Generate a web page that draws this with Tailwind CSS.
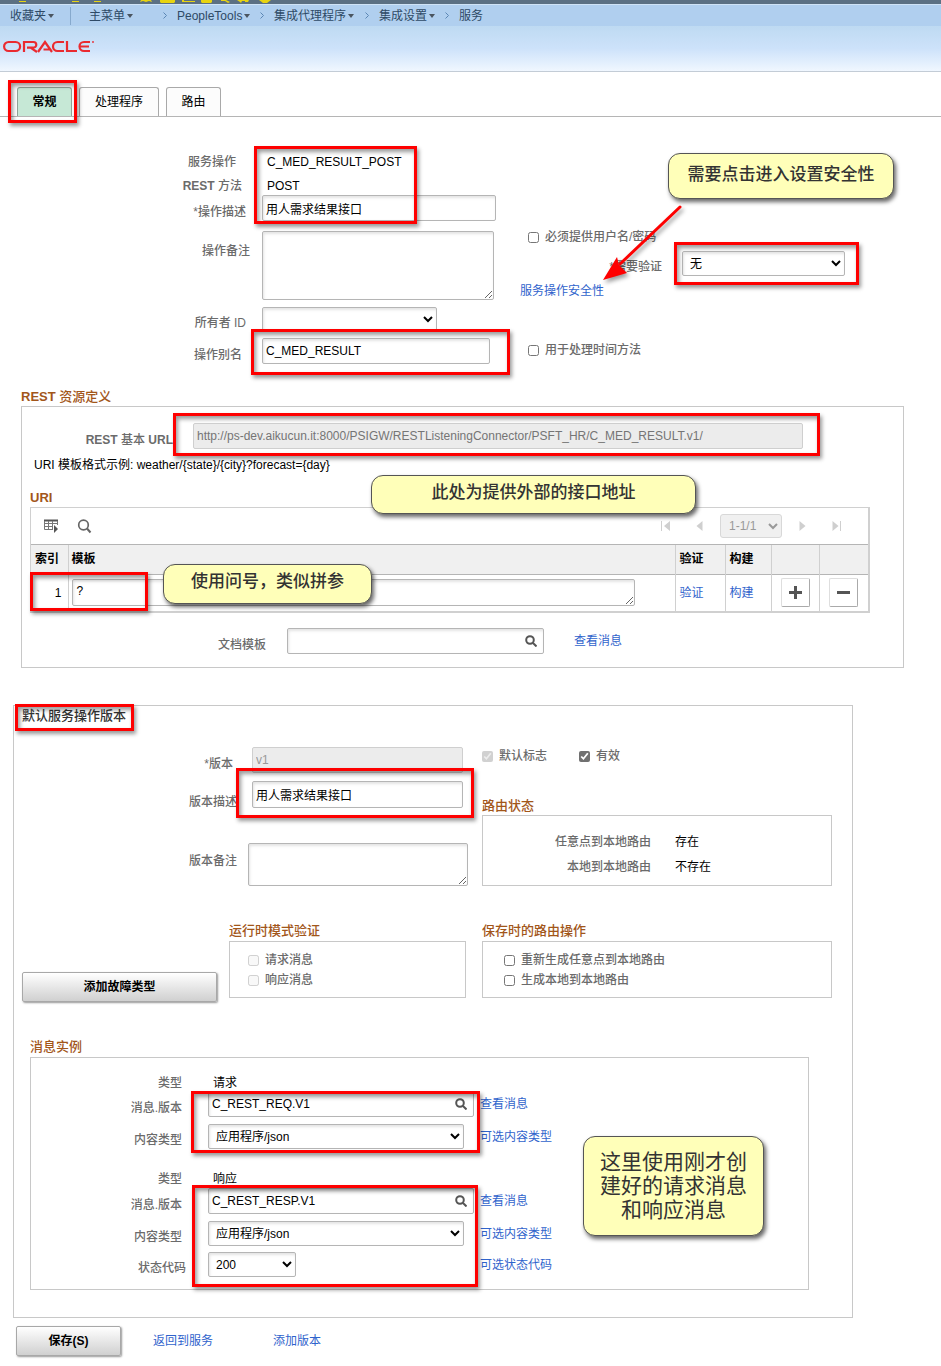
<!DOCTYPE html>
<html lang="zh-CN">
<head>
<meta charset="utf-8">
<meta name="viewport" content="width=device-width, initial-scale=1">
<title>服务操作</title>
<script src="https://cdn.jsdelivr.net/npm/@tailwindcss/browser@4"></script>
</head>
<body class="bg-white">
<div class="relative font-['Liberation_Sans','Noto_Sans_CJK_SC',sans-serif] text-[12px] leading-[18px] text-black">

<!-- top strip -->
<div class="h-1 bg-[#5b7083] overflow-hidden">
  <svg class="block" width="300" height="4" viewBox="0 0 300 4" fill="#e8d410">
    <path d="M19 1h7v1h-7zM72 1h7v1h-7zM94 1h7v1h-7z"/>
    <path d="M141 0h10l1 2-3-1-3 1-3-1-3 1zM160 0h15v2l-1 1h-13l-1-1zM182 0h2v1h11v1h-13zM201 0h11v2l-1 1h-9l-1-1zM221 0h5l4 2-2 1-3-2h-4zM237 0h12l-1 2h-3v-1h-3l-1 2-1-1zM259 0h12l-4 3h-4z"/>
  </svg>
</div>
<nav class="flex h-[22px] items-center bg-[#b0cfef] border-t border-[#cfe3f6] text-[#2e4a66]" aria-label="导航路径">
  <div class="flex w-[71px] items-center border-r border-[#86a9cd] pl-2.5">
    <a href="#">收藏夹</a><svg class="ml-0.5" width="6" height="4" viewBox="0 0 6 4" fill="#4a5560"><path d="M0 0h6L3 4z"/></svg>
  </div>
  <div class="flex w-[106px] items-center pl-[18px] pr-2.5">
    <a href="#">主菜单</a><svg class="ml-0.5" width="6" height="4" viewBox="0 0 6 4" fill="#4a5560"><path d="M0 0h6L3 4z"/></svg>
    <svg class="ml-auto" width="4" height="7" viewBox="0 0 4 7" fill="none" stroke="#5b86b4"><path d="M.5.5 3.5 3.5.5 6.5"/></svg>
  </div>
  <div class="flex w-[97px] items-center pr-2.5">
    <a href="#">PeopleTools</a><svg class="ml-0.5" width="6" height="4" viewBox="0 0 6 4" fill="#4a5560"><path d="M0 0h6L3 4z"/></svg>
    <svg class="ml-auto" width="4" height="7" viewBox="0 0 4 7" fill="none" stroke="#5b86b4"><path d="M.5.5 3.5 3.5.5 6.5"/></svg>
  </div>
  <div class="flex w-[105px] items-center pr-2.5">
    <a href="#">集成代理程序</a><svg class="ml-0.5" width="6" height="4" viewBox="0 0 6 4" fill="#4a5560"><path d="M0 0h6L3 4z"/></svg>
    <svg class="ml-auto" width="4" height="7" viewBox="0 0 4 7" fill="none" stroke="#5b86b4"><path d="M.5.5 3.5 3.5.5 6.5"/></svg>
  </div>
  <div class="flex w-20 items-center pr-2.5">
    <a href="#">集成设置</a><svg class="ml-0.5" width="6" height="4" viewBox="0 0 6 4" fill="#4a5560"><path d="M0 0h6L3 4z"/></svg>
    <svg class="ml-auto" width="4" height="7" viewBox="0 0 4 7" fill="none" stroke="#5b86b4"><path d="M.5.5 3.5 3.5.5 6.5"/></svg>
  </div>
  <a href="#">服务</a>
</nav>
<header class="h-[46px] border-b border-[#c3ccd6] bg-linear-to-b from-[#bedaf2] via-[#cde2fa] to-[#f0f7ff] pl-[3px] pt-3.5">
  <svg role="img" aria-label="Oracle" width="92" height="13" viewBox="0 0 92 13" fill="none" stroke="#ea2a30" stroke-width="2.200">
    <rect x="1.100" y="2" width="16" height="9" rx="4.500"/>
    <path d="M21 12V2h9.500a2.800 2.800 0 0 1 0 5.600H24M27.500 7.600 34 12"/>
    <path d="M35 12 42 2 49 12M40.500 9.500h6"/>
    <path d="M61 2h-6.500a4.500 4.500 0 0 0 0 9H61"/>
    <path d="M64 1v10h10"/>
    <path d="M87 2h-6a4.500 4.500 0 0 0 0 9h6M77.500 6.500h8.500"/>
    <circle cx="90" cy="2" r=".6" stroke-width="1"/>
  </svg>
</header>

<div class="flex h-[45px] items-end gap-[7px] border-b border-[#b5b5b5] pl-[17px]" role="tablist">
  <button type="button" role="tab" aria-selected="true" class="h-[29px] w-[55px] rounded-t-[3px] border border-b-0 border-[#8fa397] bg-[#c6e8d6] font-bold">常规</button>
  <button type="button" role="tab" aria-selected="false" class="h-[29px] w-20 rounded-t-[3px] border border-b-0 border-[#a9a9a9] bg-[#fcfcfc]">处理程序</button>
  <button type="button" role="tab" aria-selected="false" class="h-[29px] w-[55px] rounded-t-[3px] border border-b-0 border-[#a9a9a9] bg-[#fcfcfc]">路由</button>
</div>

<form>
<!-- general fields -->
<div class="flex pt-[33px] text-[#6b6b6b] font-medium">
  <div class="w-[520px]">
    <div class="flex h-6 items-center"><span class="w-[250px] pr-3.5 text-right">服务操作</span><span class="pl-[17px] font-normal text-black">C_MED_RESULT_POST</span></div>
    <div class="flex h-[21px] items-end"><span class="w-[250px] pr-2 text-right"><b>REST</b> 方法</span><span class="pl-[17px] font-normal text-black">POST</span></div>
    <div class="flex items-end">
      <label for="descr" class="w-[250px] pr-1 text-right">*操作描述</label>
      <input id="descr" type="text" value="用人需求结果接口" class="ml-3 h-[26px] w-[234px] rounded-[2px] border border-[#b5b5b5] px-[3px] font-normal text-black shadow-[inset_1px_2px_3px_#e4e4e4]">
    </div>
    <div class="mt-2.5 flex items-start">
      <label for="note" class="w-[250px] pt-[11px] text-right">操作备注</label>
      <textarea id="note" class="ml-3 block h-[69px] w-[232px] rounded-[2px] border border-[#b5b5b5] px-[3px] font-normal text-black shadow-[inset_1px_2px_3px_#e4e4e4]"></textarea>
    </div>
    <div class="mt-[7px] flex items-end">
      <label for="owner" class="w-[250px] pr-1 text-right">所有者 ID</label>
      <select id="owner" class="ml-3 h-[25px] w-[175px] rounded-[2px] border border-[#b5b5b5] px-[3px] font-normal text-black shadow-[inset_1px_2px_3px_#e4e4e4]"><option></option></select>
    </div>
    <div class="mt-1.5 flex items-end">
      <label for="alias" class="w-[250px] pr-2 text-right">操作别名</label>
      <input id="alias" type="text" value="C_MED_RESULT" class="ml-3 h-[26px] w-[228px] rounded-[2px] border border-[#b5b5b5] px-[3px] font-normal text-black shadow-[inset_1px_2px_3px_#e4e4e4]">
    </div>
  </div>
  <div class="pt-[78px]">
    <label class="flex items-center gap-1.5 pl-2"><input type="checkbox" class="size-[11px]">必须提供用户名/密码</label>
    <div class="mt-1.5 flex h-6 items-end"><label for="auth" class="w-[142px] text-right">*需要验证</label>
      <select id="auth" class="ml-5 h-[25px] w-[163px] rounded-[2px] border border-[#b5b5b5] px-[3px] font-normal text-black shadow-[inset_1px_2px_3px_#e4e4e4]"><option>无</option></select></div>
    <div class="mt-1.5"><a href="#" class="font-normal text-[#2f63cc]">服务操作安全性</a></div>
    <label class="mt-[41px] flex items-center gap-1.5 pl-2"><input type="checkbox" class="size-[11px]">用于处理时间方法</label>
  </div>
</div>

<!-- REST resource -->
<section class="ml-[21px] mr-[37px] mt-6">
  <h2 class="text-[13px] font-medium text-[#a2561a]"><b>REST</b> 资源定义</h2>
  <div class="h-[262px] border border-[#c8c8c8] pt-4">
    <div class="flex items-end">
      <label for="base" class="w-[151px] text-right font-medium text-[#6b6b6b]"><b>REST</b> 基本 <b>URL</b></label>
      <input id="base" type="text" disabled value="http://ps-dev.aikucun.it:8000/PSIGW/RESTListeningConnector/PSFT_HR/C_MED_RESULT.v1/" class="ml-5 mr-[100px] h-[26px] min-w-0 flex-1 rounded-[2px] border border-[#cfcfcf] bg-[#ececec] px-[3px] text-[#757575]">
    </div>
    <p class="mt-[7px] pl-3">URI 模板格式示例: weather/{state}/{city}?forecast={day}</p>
    <h3 class="mt-[15px] pl-2 text-[13px] font-bold text-[#a2561a]">URI</h3>
    <div class="ml-2 mr-[33px] border border-r-2 border-b-2 border-[#d0d0d0]">
      <div class="flex h-[37px] items-center border-b border-[#b5b5b5] pl-3 pr-[26px]">
        <button type="button" aria-label="网格操作">
          <svg class="block" width="16" height="14" viewBox="0 0 16 14" fill="none" stroke="#777"><path d="M1 1.500h14" stroke="#555" stroke-width="2"/><path d="M1.500 2v8.500H10M1 4.500h13M1 7.500h9M5.500 2v8.500M9.500 2v8.500M14.500 2v4"/><path d="M11 6v8l4-4z" fill="#555" stroke="none"/></svg>
        </button>
        <button type="button" aria-label="查找" class="ml-[18px]">
          <svg class="block" width="15" height="15" viewBox="0 0 15 15" fill="none" stroke="#666" stroke-width="1.700"><circle cx="6.500" cy="6" r="4.800"/><path d="m10 9.500 3.500 4" stroke-width="2"/></svg>
        </button>
        <div class="ml-auto flex items-center text-[#999]">
          <button type="button" disabled aria-label="首行"><svg class="block" width="10" height="12" viewBox="0 0 10 12" fill="#cfcfcf"><path d="M0 1h1v10H0zM9 1v10L3 6z"/></svg></button>
          <button type="button" disabled aria-label="上一行" class="ml-[25px]"><svg class="block" width="7" height="12" viewBox="0 0 7 12" fill="#cfcfcf"><path d="M6.500 1v10L.5 6z"/></svg></button>
          <select disabled aria-label="行" class="ml-[17px] h-6 w-[62px] rounded-[3px] border border-[#d8d8d8] bg-[#f0f0f0] pl-1 text-[#999] opacity-100"><option>1-1/1</option></select>
          <button type="button" disabled aria-label="下一行" class="ml-[17px]"><svg class="block" width="7" height="12" viewBox="0 0 7 12" fill="#cfcfcf"><path d="M.5 1v10l6-5z"/></svg></button>
          <button type="button" disabled aria-label="末行" class="ml-[26px]"><svg class="block" width="10" height="12" viewBox="0 0 10 12" fill="#cfcfcf"><path d="M8 1h1v10H8zM.5 1v10l6-5z"/></svg></button>
        </div>
      </div>
      <table class="w-full table-fixed border-collapse text-left">
        <thead><tr class="h-[29px] border-b border-[#b5b5b5] bg-[#f0f0f0]">
          <th class="w-[37px] border-r border-[#d0d0d0] pl-1">索引</th>
          <th class="border-r border-[#d0d0d0] pl-[3px]">模板</th>
          <th class="w-[50px] border-r border-[#d0d0d0] pl-1">验证</th>
          <th class="w-[46px] border-r border-[#d0d0d0] pl-1">构建</th>
          <th class="w-12 border-r border-[#d0d0d0]"></th>
          <th class="w-[49px]"></th>
        </tr></thead>
        <tbody><tr class="h-[37px]">
          <td class="border-r border-[#d0d0d0] pr-1.5 text-right">1</td>
          <td class="border-r border-[#d0d0d0] pl-[3px] pr-10"><textarea aria-label="模板" class="block h-[27px] w-full rounded-[2px] border border-[#b5b5b5] px-1 py-0.5 shadow-[inset_1px_2px_3px_#e4e4e4]">?</textarea></td>
          <td class="border-r border-[#d0d0d0] pl-1"><a href="#" class="text-[#2f63cc]">验证</a></td>
          <td class="border-r border-[#d0d0d0] pl-1"><a href="#" class="text-[#2f63cc]">构建</a></td>
          <td class="border-r border-[#d0d0d0]"><button type="button" aria-label="添加行" class="mx-auto flex size-[29px] items-center justify-center rounded-[2px] border border-[#dedede] border-b-[#aaa] border-r-[#aaa]"><svg width="13" height="13" viewBox="0 0 13 13" stroke="#555" stroke-width="3"><path d="M0 6.500h13M6.500 0v13"/></svg></button></td>
          <td><button type="button" aria-label="删除行" class="mx-auto flex size-[29px] items-center justify-center rounded-[2px] border border-[#dedede] border-b-[#aaa] border-r-[#aaa]"><svg width="13" height="13" viewBox="0 0 13 13" stroke="#555" stroke-width="3"><path d="M0 6.500h13"/></svg></button></td>
        </tr></tbody>
      </table>
    </div>
    <div class="mt-[15px] flex items-center">
      <label for="doc" class="w-[244px] pt-2 text-right font-medium text-[#6b6b6b]">文档模板</label>
      <div class="ml-[21px] flex h-[26px] w-[257px] items-center rounded-[2px] border border-[#b5b5b5] pr-1.5 shadow-[inset_1px_2px_3px_#e4e4e4]">
        <input id="doc" type="text" class="min-w-0 flex-1 px-1 outline-none">
        <button type="button" aria-label="查找文档模板"><svg class="block" width="12" height="12" viewBox="0 0 12 12" fill="none" stroke="#555" stroke-width="2"><circle cx="5" cy="5" r="3.800"/><path d="m8 8 3.500 3.500"/></svg></button>
      </div>
      <a href="#" class="ml-[30px] text-[#2f63cc]">查看消息</a>
    </div>
  </div>
</section>

<!-- default version -->
<section class="ml-[13px] mr-[88px] mt-[37px] h-[613px] border border-[#c8c8c8] font-medium text-[#6b6b6b]">
  <h2 class="pl-2 text-[13px] leading-5 text-[#333]">默认服务操作版本</h2>
  <div class="flex pt-[21px]">
    <div class="w-[467px]">
      <div class="flex items-end">
        <label for="ver" class="w-[223px] pr-1 text-right">*版本</label>
        <input id="ver" type="text" value="v1" disabled class="ml-[15px] h-[26px] w-[211px] rounded-[2px] border border-[#cfcfcf] bg-[#ececec] px-[3px] font-normal text-[#999]">
      </div>
      <div class="mt-2 flex items-start">
        <label for="verd" class="w-[223px] pt-3 text-right">版本描述</label>
        <input id="verd" type="text" value="用人需求结果接口" class="ml-[15px] h-[27px] w-[211px] rounded-[2px] border border-[#b5b5b5] px-[3px] font-normal text-black shadow-[inset_1px_2px_3px_#e4e4e4]">
      </div>
      <div class="mt-8 flex items-start">
        <label for="vern" class="w-[223px] pt-[9px] text-right">版本备注</label>
        <textarea id="vern" class="ml-[11px] block h-[43px] w-[220px] rounded-[2px] border border-[#b5b5b5] px-[3px] font-normal text-black shadow-[inset_1px_2px_3px_#e4e4e4]"></textarea>
      </div>
    </div>
    <div class="mr-5 flex-1 pl-px">
      <div class="flex gap-8">
        <label class="flex items-center gap-1.5"><input type="checkbox" checked disabled class="size-[11px]">默认标志</label>
        <label class="flex items-center gap-1.5"><input type="checkbox" checked class="size-[11px] accent-[#707070]">有效</label>
      </div>
      <h3 class="mt-8 text-[13px] text-[#a2561a]">路由状态</h3>
      <dl class="grid h-[71px] grid-cols-[168px_1fr] content-start gap-x-6 gap-y-[7px] border border-[#c8c8c8] pt-[17px]">
        <dt class="text-right">任意点到本地路由</dt><dd class="font-normal text-black">存在</dd>
        <dt class="text-right">本地到本地路由</dt><dd class="font-normal text-black">不存在</dd>
      </dl>
    </div>
  </div>
  <div class="mr-5 mt-9 flex items-end">
    <button type="button" class="ml-2 -mb-1 h-[30px] w-[195px] rounded-[2px] border border-[#a8a8a8] bg-linear-to-b from-white to-[#d0d0d0] font-bold text-black shadow-[1px_1px_2px_#999]">添加故障类型</button>
    <div class="ml-3 w-[237px]">
      <h3 class="text-[13px] text-[#a2561a]">运行时模式验证</h3>
      <div class="mt-px flex h-[57px] flex-col gap-0.5 border border-[#c8c8c8] pl-[18px] pt-[9px]">
        <label class="flex items-center gap-1.5"><input type="checkbox" disabled class="size-[11px]">请求消息</label>
        <label class="flex items-center gap-1.5"><input type="checkbox" disabled class="size-[11px]">响应消息</label>
      </div>
    </div>
    <div class="ml-4 flex-1">
      <h3 class="text-[13px] text-[#a2561a]">保存时的路由操作</h3>
      <div class="mt-px flex h-[57px] flex-col gap-0.5 border border-[#c8c8c8] pl-[21px] pt-[9px]">
        <label class="flex items-center gap-1.5"><input type="checkbox" class="size-[11px]">重新生成任意点到本地路由</label>
        <label class="flex items-center gap-1.5"><input type="checkbox" class="size-[11px]">生成本地到本地路由</label>
      </div>
    </div>
  </div>
  <div class="ml-4 mr-[43px] mt-10">
    <h3 class="text-[13px] text-[#a2561a]">消息实例</h3>
    <div class="mt-px h-[233px] border border-[#c8c8c8] pt-4">
      <div class="flex h-[17px] items-center"><span class="w-[151px] text-right">类型</span><span class="pl-[31px] font-normal text-black">请求</span></div>
      <div class="flex items-end">
        <label for="m1" class="w-[151px] text-right">消息.版本</label>
        <div class="ml-[26px] flex h-[26px] w-[266px] items-center rounded-[2px] border border-[#b5b5b5] pr-1.5 font-normal text-black shadow-[inset_1px_2px_3px_#e4e4e4]">
          <input id="m1" type="text" value="C_REST_REQ.V1" class="min-w-0 flex-1 px-[3px] outline-none">
          <button type="button" aria-label="查找消息"><svg class="block" width="12" height="12" viewBox="0 0 12 12" fill="none" stroke="#555" stroke-width="2"><circle cx="5" cy="5" r="3.800"/><path d="m8 8 3.500 3.500"/></svg></button>
        </div>
        <a href="#" class="ml-1.5 self-center font-normal text-[#2f63cc]">查看消息</a>
      </div>
      <div class="mt-[7px] flex items-end">
        <label for="c1" class="w-[151px] text-right">内容类型</label>
        <select id="c1" class="ml-[26px] h-[25px] w-64 rounded-[2px] border border-[#b5b5b5] px-[3px] font-normal text-black shadow-[inset_1px_2px_3px_#e4e4e4]"><option>应用程序/json</option></select>
        <a href="#" class="ml-4 self-center font-normal text-[#2f63cc]">可选内容类型</a>
      </div>
      <div class="mt-[21px] flex h-[18px] items-center"><span class="w-[151px] text-right">类型</span><span class="pl-[31px] font-normal text-black">响应</span></div>
      <div class="flex items-end">
        <label for="m2" class="w-[151px] text-right">消息.版本</label>
        <div class="ml-[26px] flex h-[26px] w-[266px] items-center rounded-[2px] border border-[#b5b5b5] pr-1.5 font-normal text-black shadow-[inset_1px_2px_3px_#e4e4e4]">
          <input id="m2" type="text" value="C_REST_RESP.V1" class="min-w-0 flex-1 px-[3px] outline-none">
          <button type="button" aria-label="查找消息"><svg class="block" width="12" height="12" viewBox="0 0 12 12" fill="none" stroke="#555" stroke-width="2"><circle cx="5" cy="5" r="3.800"/><path d="m8 8 3.500 3.500"/></svg></button>
        </div>
        <a href="#" class="ml-1.5 self-center font-normal text-[#2f63cc]">查看消息</a>
      </div>
      <div class="mt-[7px] flex items-end">
        <label for="c2" class="w-[151px] text-right">内容类型</label>
        <select id="c2" class="ml-[26px] h-[25px] w-64 rounded-[2px] border border-[#b5b5b5] px-[3px] font-normal text-black shadow-[inset_1px_2px_3px_#e4e4e4]"><option>应用程序/json</option></select>
        <a href="#" class="ml-4 self-center font-normal text-[#2f63cc]">可选内容类型</a>
      </div>
      <div class="mt-1.5 flex items-end">
        <label for="s2" class="w-[155px] text-right">状态代码</label>
        <select id="s2" class="ml-[22px] h-[25px] w-[88px] rounded-[2px] border border-[#b5b5b5] px-[3px] font-normal text-black shadow-[inset_1px_2px_3px_#e4e4e4]"><option>200</option></select>
        <a href="#" class="ml-[184px] self-center font-normal text-[#2f63cc]">可选状态代码</a>
      </div>
    </div>
  </div>
</section>

<div class="flex items-center pb-2.5 pl-4 pt-2">
  <button type="submit" class="h-[30px] w-[105px] rounded-[2px] border border-[#a8a8a8] bg-linear-to-b from-white to-[#d0d0d0] font-bold shadow-[1px_1px_2px_#999]">保存(S)</button>
  <a href="#" class="ml-8 text-[#2f63cc]">返回到服务</a>
  <a href="#" class="ml-[60px] text-[#2f63cc]">添加版本</a>
</div>
</form>

<!-- annotation frames, arrow and callouts -->
<div class="pointer-events-none">
  <div class="absolute left-2 top-20 h-[43px] w-[69px] border-3 border-[#fe0000] shadow-[2px_3px_4px_#0006,inset_2px_3px_4px_#0006]"></div>
  <div class="absolute left-[254px] top-[146px] h-[78px] w-[163px] border-3 border-[#fe0000] shadow-[2px_3px_4px_#0006,inset_2px_3px_4px_#0006]"></div>
  <div class="absolute left-[674px] top-[242px] h-[43px] w-[185px] border-3 border-[#fe0000] shadow-[2px_3px_4px_#0006,inset_2px_3px_4px_#0006]"></div>
  <div class="absolute left-[251px] top-[329px] h-[46px] w-[259px] border-3 border-[#fe0000] shadow-[2px_3px_4px_#0006,inset_2px_3px_4px_#0006]"></div>
  <div class="absolute left-[173px] top-[413px] h-[43px] w-[647px] border-3 border-[#fe0000] shadow-[2px_3px_4px_#0006,inset_2px_3px_4px_#0006]"></div>
  <div class="absolute left-[30px] top-[572px] h-[39px] w-[118px] border-3 border-[#fe0000] shadow-[2px_3px_4px_#0006,inset_2px_3px_4px_#0006]"></div>
  <div class="absolute left-[15px] top-[704px] h-[27px] w-[119px] border-3 border-[#fe0000] shadow-[2px_3px_4px_#0006,inset_2px_3px_4px_#0006]"></div>
  <div class="absolute left-[236px] top-[768px] h-[50px] w-[238px] border-3 border-[#fe0000] shadow-[2px_3px_4px_#0006,inset_2px_3px_4px_#0006]"></div>
  <div class="absolute left-[191px] top-[1091px] h-[62px] w-[289px] border-3 border-[#fe0000] shadow-[2px_3px_4px_#0006,inset_2px_3px_4px_#0006]"></div>
  <div class="absolute left-[192px] top-[1185px] h-[102px] w-[286px] border-3 border-[#fe0000] shadow-[2px_3px_4px_#0006,inset_2px_3px_4px_#0006]"></div>
  <svg class="absolute left-[600px] top-[200px] drop-shadow-[2px_3px_2px_#0006]" width="90" height="85" viewBox="0 0 90 85" fill="#fe0000"><path d="M80 7 20 64" stroke="#fe0000" stroke-width="3" stroke-linecap="round"/><path d="M3 80 17 57 19 65 27 73z"/></svg>
  <div class="absolute left-[668px] top-[153px] flex h-[46px] w-[226px] items-start justify-center rounded-xl border border-[#555] bg-[#ffffb9] pt-2.5 text-[17px] leading-[22px] font-medium text-[#333] shadow-[2px_3px_4px_#0009]">需要点击进入设置安全性</div>
  <div class="absolute left-[371px] top-[475px] flex h-[39px] w-[325px] items-start justify-center rounded-xl border border-[#555] bg-[#ffffb9] pt-1.5 text-[17px] leading-[22px] font-medium text-[#333] shadow-[2px_3px_4px_#0009]">此处为提供外部的接口地址</div>
  <div class="absolute left-[163px] top-[564px] flex h-10 w-[209px] items-start justify-center rounded-xl border border-[#555] bg-[#ffffb9] pt-1.5 text-[17px] leading-[22px] font-medium text-[#333] shadow-[2px_3px_4px_#0009]">使用问号，类似拼参</div>
  <div class="absolute left-[583px] top-[1136px] h-[100px] w-[181px] rounded-xl border border-[#555] bg-[#ffffb9] px-4 pt-[13px] text-center text-[21px] leading-6 text-[#333] shadow-[2px_3px_4px_#0009]">这里使用刚才创建好的请求消息和响应消息</div>
</div>
</div>
</body>
</html>
